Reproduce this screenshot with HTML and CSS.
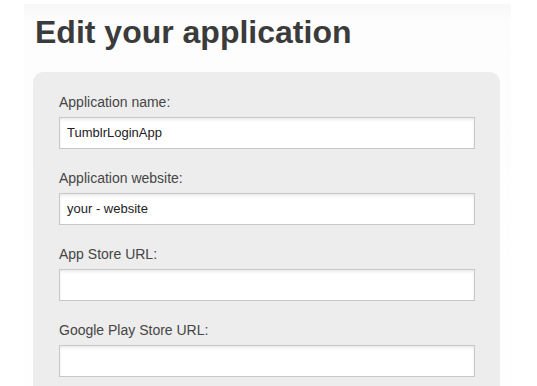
FILE: index.html
```html
<!DOCTYPE html>
<html>
<head>
<meta charset="utf-8">
<link rel="stylesheet" href="styles.css">
</head>
<body>
<div class="page">
  <h1 class="title">Edit your application</h1>
  <form class="panel">
    <div class="field">
      <label class="label">Application name:</label>
      <div class="input">TumblrLoginApp</div>
    </div>
    <div class="field">
      <label class="label">Application website:</label>
      <div class="input">your - website</div>
    </div>
    <div class="field">
      <label class="label">App Store URL:</label>
      <div class="input"></div>
    </div>
    <div class="field">
      <label class="label">Google Play Store URL:</label>
      <div class="input"></div>
    </div>
  </form>
</div>
</body>
</html>
```
FILE: styles.css
```css
html, body {
  margin: 0;
  padding: 0;
  background: #ffffff;
  height: 100%;
  overflow: hidden;
}
body {
  font-family: "Liberation Sans", Arial, sans-serif;
}
.page {
  margin: 4px 26px 0 24px;
  padding: 0 9px;
  height: 400px;
  background: linear-gradient(#f8f8f8, #fdfdfd 20px, #fefefe);
}
.title {
  margin: 0;
  padding: 8px 0 0 2px;
  height: 60px;
  box-sizing: border-box;
  font-size: 32px;
  font-weight: bold;
  line-height: 40px;
  color: #3b3b3b;
  letter-spacing: 0;
}
.panel {
  margin-top: 8px;
  background: #ededed;
  border-radius: 10px;
  padding: 20px 25px 20px 26px;
  display: flex;
  flex-direction: column;
  gap: 19px;
  width: 467px;
  box-sizing: border-box;
}
.field {
  display: flex;
  flex-direction: column;
  gap: 5px;
}
.label {
  font-size: 14px;
  line-height: 20px;
  color: #454545;
}
.input {
  height: 32px;
  box-sizing: border-box;
  background: #ffffff;
  border: 1px solid #c8c8c8;
  box-shadow: inset 0 2px 3px rgba(0,0,0,0.08);
  font-size: 13px;
  line-height: 30px;
  padding-left: 7px;
  color: #222222;
}
```
